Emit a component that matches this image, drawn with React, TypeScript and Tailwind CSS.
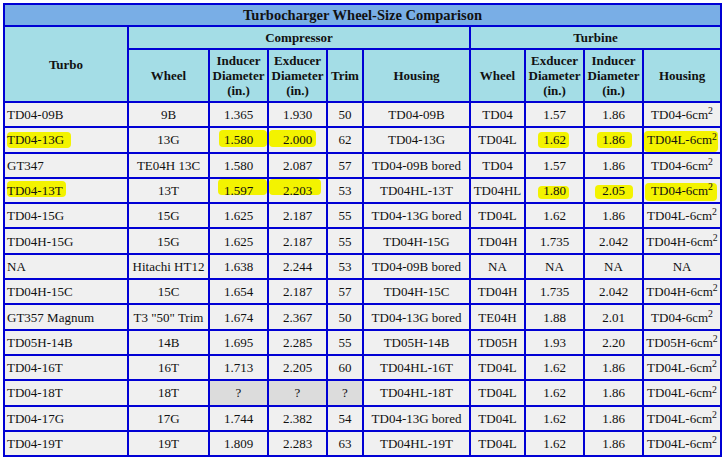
import { FC, ReactNode } from 'react';

type Row = {
  cells: string[];
  marks?: Record<number, string>;
};

const rows: Row[] = [
  { cells: ['TD04-09B', '9B', '1.365', '1.930', '50', 'TD04-09B', 'TD04', '1.57', '1.86', 'TD04-6cm'] },
  {
    cells: ['TD04-13G', '13G', '1.580', '2.000', '62', 'TD04-13G', 'TD04L', '1.62', '1.86', 'TD04L-6cm'],
    marks: {
      0: 'left-[2px] w-[64px] top-[4px] bottom-[4px]',
      2: 'left-[9px] right-0 top-[2px] bottom-[5px]',
      3: 'left-0 right-[10px] top-[2px] bottom-[5px]',
      7: 'left-[12px] right-[14px] top-[4px] bottom-[4px]',
      8: 'left-[12px] right-[10px] top-[4px] bottom-[4px]',
      9: 'left-0 right-[2px] top-[3px] bottom-0',
    },
  },
  { cells: ['GT347', 'TE04H 13C', '1.580', '2.087', '57', 'TD04-09B bored', 'TD04', '1.57', '1.86', 'TD04-6cm'] },
  {
    cells: ['TD04-13T', '13T', '1.597', '2.203', '53', 'TD04HL-13T', 'TD04HL', '1.80', '2.05', 'TD04-6cm'],
    marks: {
      0: 'left-[2px] w-[59px] top-[2px] bottom-[5px]',
      2: 'left-[8px] right-0 top-0 bottom-[7px]',
      3: 'left-0 right-[5px] top-0 bottom-[7px]',
      7: 'left-[12px] right-[14px] top-[7px] bottom-[3px]',
      8: 'left-[10px] right-[9px] top-[6px] bottom-[3px]',
      9: 'left-[1px] right-[3px] top-[4px] bottom-[1px]',
    },
  },
  { cells: ['TD04-15G', '15G', '1.625', '2.187', '55', 'TD04-13G bored', 'TD04L', '1.62', '1.86', 'TD04L-6cm'] },
  { cells: ['TD04H-15G', '15G', '1.625', '2.187', '55', 'TD04H-15G', 'TD04H', '1.735', '2.042', 'TD04H-6cm'] },
  { cells: ['NA', 'Hitachi HT12', '1.638', '2.244', '53', 'TD04-09B bored', 'NA', 'NA', 'NA', 'NA'] },
  { cells: ['TD04H-15C', '15C', '1.654', '2.187', '57', 'TD04H-15C', 'TD04H', '1.735', '2.042', 'TD04H-6cm'] },
  { cells: ['GT357 Magnum', 'T3 "50" Trim', '1.674', '2.367', '50', 'TD04-13G bored', 'TE04H', '1.88', '2.01', 'TD04-6cm'] },
  { cells: ['TD05H-14B', '14B', '1.695', '2.285', '55', 'TD05H-14B', 'TD05H', '1.93', '2.20', 'TD05H-6cm'] },
  { cells: ['TD04-16T', '16T', '1.713', '2.205', '60', 'TD04HL-16T', 'TD04L', '1.62', '1.86', 'TD04L-6cm'] },
  { cells: ['TD04-18T', '18T', '?', '?', '?', 'TD04HL-18T', 'TD04L', '1.62', '1.86', 'TD04L-6cm'] },
  { cells: ['TD04-17G', '17G', '1.744', '2.382', '54', 'TD04-13G bored', 'TD04L', '1.62', '1.86', 'TD04L-6cm'] },
  { cells: ['TD04-19T', '19T', '1.809', '2.283', '63', 'TD04HL-19T', 'TD04L', '1.62', '1.86', 'TD04L-6cm'] },
];

const colWidths = ['w-[124px]', 'w-[81px]', 'w-[59px]', 'w-[59px]', 'w-[36px]', 'w-[107px]', 'w-[55px]', 'w-[59px]', 'w-[59px]', 'w-[78px]'];

const cellBorder = 'border-2 border-[#0000d4]';

const Value: FC<{ text: string; col: number }> = ({ text, col }) => {
  if (col === 9 && text.endsWith('cm')) {
    return (
      <>
        {text}
        <sup>2</sup>
      </>
    );
  }
  return <>{text}</>;
};

const Th: FC<{ children: ReactNode; colSpan?: number; rowSpan?: number; className?: string }> = ({
  children,
  colSpan,
  rowSpan,
  className = '',
}) => (
  <th colSpan={colSpan} rowSpan={rowSpan} className={`${cellBorder} px-[2px] py-0 font-bold text-[13px] leading-[15px] ${className}`}>
    {children}
  </th>
);

export default function App() {
  return (
    <div className="min-h-screen bg-white pl-[3px] pt-[3px] font-['Liberation_Serif',serif] text-[#111]">
      <table className={`table-fixed border-collapse w-[719px] ${cellBorder}`}>
        <colgroup>
          {colWidths.map((w, i) => (
            <col key={i} className={w} />
          ))}
        </colgroup>
        <thead>
          <tr className="h-[22px] bg-[#79aee6]">
            <th colSpan={10} className={`${cellBorder} p-0 text-[14.5px] leading-[17px] font-bold`}>
              Turbocharger Wheel-Size Comparison
            </th>
          </tr>
          <tr className="h-[23px] bg-[#a4dde6]">
            <Th rowSpan={2}>Turbo</Th>
            <Th colSpan={5}>Compressor</Th>
            <Th colSpan={4}>Turbine</Th>
          </tr>
          <tr className="h-[53px] bg-[#a4dde6]">
            <Th>Wheel</Th>
            <Th>
              Inducer
              <br />
              Diameter
              <br />
              (in.)
            </Th>
            <Th>
              Exducer
              <br />
              Diameter
              <br />
              (in.)
            </Th>
            <Th>Trim</Th>
            <Th>Housing</Th>
            <Th>Wheel</Th>
            <Th>
              Exducer
              <br />
              Diameter
              <br />
              (in.)
            </Th>
            <Th>
              Inducer
              <br />
              Diameter
              <br />
              (in.)
            </Th>
            <Th>Housing</Th>
          </tr>
        </thead>
        <tbody>
          {rows.map((row, r) => (
            <tr key={r} className="h-[25.3px] bg-[#f0f0f0]">
              {row.cells.map((text, c) => {
                const mark = row.marks?.[c];
                const unknown = text === '?';
                return (
                  <td
                    key={c}
                    className={`${cellBorder} relative py-0 text-[13px] leading-[15px] whitespace-nowrap ${
                      c === 0 ? 'pl-[2px] pr-0 text-left' : 'px-0 text-center'
                    } ${unknown ? 'bg-[#dcdcdc]' : ''}`}
                  >
                    {mark && <span className={`absolute rounded-[4px] bg-[#f3f300] ${mark}`} />}
                    <span className="relative">
                      <Value text={text} col={c} />
                    </span>
                  </td>
                );
              })}
            </tr>
          ))}
        </tbody>
      </table>
    </div>
  );
}
